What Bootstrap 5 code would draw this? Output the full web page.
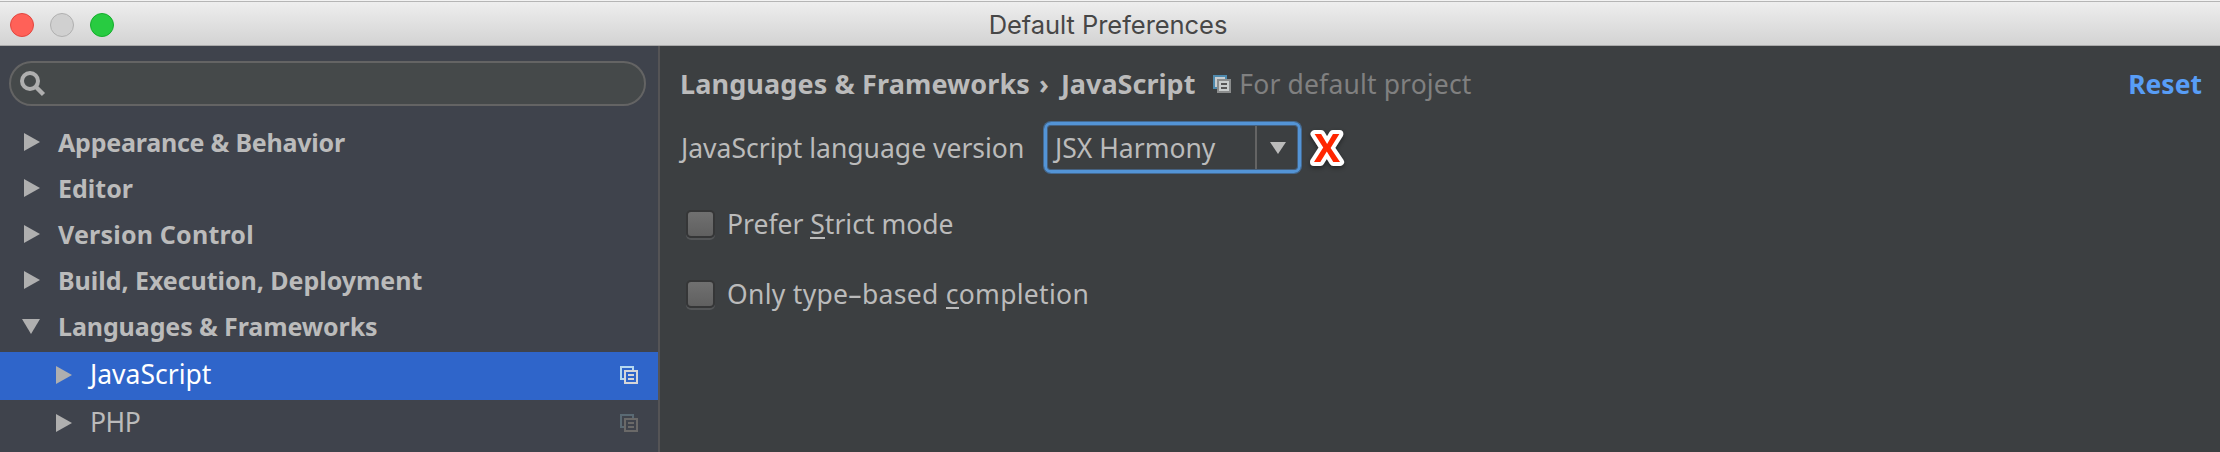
<!DOCTYPE html>
<html lang="en">
<head>
<meta charset="utf-8">
<title>Default Preferences</title>
<link href="https://cdn.jsdelivr.net/npm/bootstrap@5.3.0/dist/css/bootstrap.min.css" rel="stylesheet">
<style>
body{height:452px;overflow:hidden;background:#3c3f41;color:#bbb;font:26.5px/46px "Noto Sans","Open Sans",sans-serif;white-space:nowrap}
.titlebar{height:46px;padding:4px 0 0 10px;gap:16px;background:linear-gradient(#efefef,#d3d3d3);border-bottom:1px solid #aaa;box-shadow:inset 0 1px #f2f2f2,inset 0 2px #b5b5b5}
.light{width:24px;height:24px;border-radius:50%;border:1px solid}
.light-close{background:#ff6158;border-color:#e2463f}
.light-min{background:#d0d0d0;border-color:#b0b0b0}
.light-max{background:#28cb41;border-color:#14ae2c}
.window-title{font:25.5px/40px Inter,sans-serif;letter-spacing:-.05px;color:#474747;left:0;right:4px;top:5px}
.side{width:660px;height:406px;background:#3f434c;border-right:2px solid #555456}
.search{margin:15px 12px 13px 9px;height:45px;width:637px;border:2px solid #646464;border-radius:23px;background:#45494a;padding-left:9px}
.tree-row{height:46px;padding-left:22px}
.tree-row svg{flex:none}
.tree-row b{margin-left:18px;font-size:25px;font-weight:700}
.child{height:48px;padding-left:54px}
.child > svg:first-child{margin-top:-2px}
.child span{margin-left:18px;position:relative;top:-2px}
.child.sel{background:#2f65ca;color:#fff;margin-top:3px}
.child .scope{margin:-2px 20px 0 auto}
.pane{padding:16px 18px 0 20px}
.crumbs{height:44px;line-height:44px}
.crumbs .path{font-size:27px}
.hint{color:#808080;margin-left:8px;letter-spacing:.15px}
.reset{color:#589df6}
.langrow{height:51px;margin-top:16px}
.langrow label{width:363px;margin-left:1px}
.combo{width:257px;height:51px;border:3px solid #5394d6;border-radius:7px;padding-left:8px;box-shadow:0 0 0 1px #446a92,inset 0 0 0 1px #456180}
.combo .arrow{width:43px;border-left:2px solid #646464;height:43px}
.cross{margin-left:6px;overflow:visible;filter:drop-shadow(0 2px 2px #0006)}
.check{width:29px;height:28px;margin:0 12px 0 6px;border:2px solid #353637;border-radius:5px;background:linear-gradient(#707070,#606060);box-shadow:0 2px #535557}
.opt{height:46px}
.opt u{text-decoration:none;box-shadow:0 2px #bbb;display:inline-block;line-height:25px}
</style>
</head>
<body>
<header class="titlebar d-flex align-items-center position-relative">
 <i class="light light-close"></i><i class="light light-min"></i><i class="light light-max"></i>
 <div class="window-title position-absolute text-center">Default Preferences</div>
</header>
<svg width="0" height="0" class="position-absolute">
 <symbol id="right" viewBox="0 0 18 18"><path d="M2 0 18 9 2 18Z" fill="#afafaf"/></symbol>
 <symbol id="down" viewBox="0 0 18 18"><path d="M0 2H18L9 17Z" fill="#afafaf"/></symbol>
</svg>
<div class="d-flex">
 <aside class="side">
  <div class="search d-flex align-items-center"><svg width="26" height="26"><circle cx="10" cy="10" r="8" fill="none" stroke="#afafaf" stroke-width="4"/><path d="M15.5 15.5 23.5 23.5" stroke="#afafaf" stroke-width="4.5"/></svg></div>
  <nav>
   <div class="tree-row d-flex align-items-center"><svg width="18" height="18"><use href="#right"/></svg><b style="letter-spacing:-.22px">Appearance &amp; Behavior</b></div>
   <div class="tree-row d-flex align-items-center"><svg width="18" height="18"><use href="#right"/></svg><b>Editor</b></div>
   <div class="tree-row d-flex align-items-center"><svg width="18" height="18"><use href="#right"/></svg><b style="letter-spacing:.2px">Version Control</b></div>
   <div class="tree-row d-flex align-items-center"><svg width="18" height="18"><use href="#right"/></svg><b style="letter-spacing:-.04px">Build, Execution, Deployment</b></div>
   <div class="tree-row d-flex align-items-center"><svg width="18" height="18"><use href="#down"/></svg><b style="letter-spacing:-.1px">Languages &amp; Frameworks</b></div>
   <div class="tree-row child sel d-flex align-items-center"><svg width="18" height="18"><use href="#right"/></svg><span>JavaScript</span>
    <svg class="scope" width="18" height="18" fill="none" stroke-width="2"><path d="M4 13H1V1H13V4" stroke="#b5d8f0"/><path d="M5 5H17V17H5ZM8 9H14M8 13H14" stroke="#d5d5d8"/></svg></div>
   <div class="tree-row child d-flex align-items-center"><svg width="18" height="18"><use href="#right"/></svg><span style="letter-spacing:-.5px">PHP</span>
    <svg class="scope" width="18" height="18" fill="none" stroke-width="2"><path d="M4 13H1V1H13V4" stroke="#5a6a74"/><path d="M5 5H17V17H5ZM8 9H14M8 13H14" stroke="#6a6968"/></svg></div>
  </nav>
 </aside>
 <main class="pane flex-grow-1">
  <div class="crumbs d-flex align-items-center">
   <b class="path" style="letter-spacing:.12px">Languages &amp; Frameworks</b><b class="path" style="margin:0 12px 0 9px">›</b><b class="path">JavaScript</b>
   <svg style="margin-left:18px" width="18" height="18" fill="none" stroke-width="2"><path d="M0 0H14V14H0Z" fill="#4f8aae"/><path d="M2 2H12V12H2Z" fill="#c8cdd0"/><path d="M4 4H18V18H4Z" fill="#3c3f41"/><path d="M5 5H17V17H5Z" fill="#c8cccc" stroke="#8a8c8c"/><path d="M8 9H14M8 13H14" stroke="#555"/></svg>
   <span class="hint">For default project</span><b class="reset ms-auto">Reset</b>
  </div>
  <div class="langrow d-flex align-items-center">
   <label>JavaScript language version</label>
   <div class="combo d-flex align-items-center justify-content-between"><span>JSX Harmony</span><div class="arrow d-flex align-items-center"><svg width="16" height="12" style="margin-left:13px"><path d="M0 0H16L8 12Z" fill="#bbb"/></svg></div></div>
   <svg class="cross" width="40" height="44"><text x="20" y="36" text-anchor="middle" font-family="Open Sans" font-weight="700" font-size="39" fill="#ff2600" stroke="#fff" stroke-width="8" stroke-linejoin="round" paint-order="stroke">X</text></svg>
  </div>
  <div class="opt d-flex align-items-center" style="margin-top:28px"><i class="check"></i><span>Prefer <u>S</u>trict mode</span></div>
  <div class="opt d-flex align-items-center" style="margin-top:24px"><i class="check"></i><span style="letter-spacing:.3px">Only type–based <u>c</u>ompletion</span></div>
 </main>
</div>
<script src="https://cdn.jsdelivr.net/npm/bootstrap@5.3.0/dist/js/bootstrap.bundle.min.js"></script>
</body>
</html>
